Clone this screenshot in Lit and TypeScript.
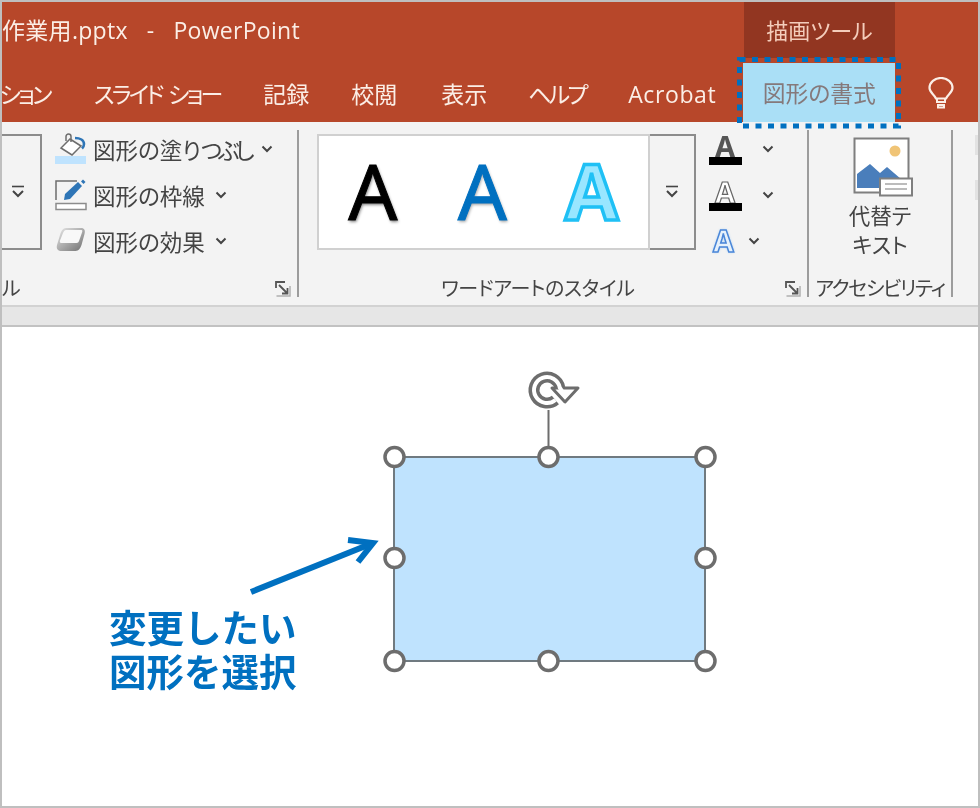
import { LitElement, html, css, svg } from "lit";
import { customElement } from "lit/decorators.js";

const chev = html`<svg class="chev" width="12" height="8" viewBox="0 0 12 8"><path d="M1.500 1.500 6 6l4.500-4.500" fill="none" stroke="#444" stroke-width="2"/></svg>`;
const more = html`<svg width="14" height="14" viewBox="0 0 14 14"><path d="M1 1.500h12" stroke="#444" stroke-width="1.600"/><path d="M2 6l5 5 5-5" fill="none" stroke="#444" stroke-width="2"/></svg>`;
const launcher = html`<svg class="launch" width="16" height="16" viewBox="0 0 16 16"><path d="M15 5V15H1.500" fill="none" stroke="#b0b0b0" stroke-width="1.500"/><path d="M1 7V1h9" fill="none" stroke="#555" stroke-width="1.800"/><path d="M4 4l8.500 8.500M7 12.500h5.500V7" fill="none" stroke="#555" stroke-width="1.800"/></svg>`;

const fillIcon = html`<svg width="32" height="32" viewBox="0 0 32 32">
  <path d="M0 23h31v8H0z" fill="#bfe3fe"/>
  <path d="M15 6 26 13 17 22 6 15z" fill="#fff" stroke="#6d6d6d" stroke-width="1.500"/>
  <path d="M11 8V3.500a2.500 2.500 0 0 1 5 0V9" fill="none" stroke="#6d6d6d" stroke-width="1.500"/>
  <path d="M20 5c5 0 9 2 9 6 0 2-1 3.500-2 4.500" fill="none" stroke="#2e75b6" stroke-width="2.600"/>
</svg>`;
const lineIcon = html`<svg width="32" height="32" viewBox="0 0 32 32">
  <path d="M1 21V2h21" fill="none" stroke="#6d6d6d" stroke-width="1.500"/>
  <path d="M1 24.500h30v6H1z" fill="#fff" stroke="#8c8c8c" stroke-width="1.500"/>
  <path d="M9 21 10 15 23 3l4 4L15 20z" fill="#2e75b6"/>
  <path d="M28 .5l2.500 2.500-2 2-2.500-2.500z" fill="#2e75b6"/>
</svg>`;
const effectIcon = html`<svg width="32" height="32" viewBox="0 0 32 32">
  <defs><linearGradient id="eg" x1="0" y1="0" x2="1" y2="1"><stop offset="0" stop-color="#e8e8e8"/><stop offset="1" stop-color="#6f6f6f"/></linearGradient></defs>
  <path d="M11 3h15c3.500 0 4.500 2.500 3.500 6l-3 11c-1 3-3 6-6 6H7c-4 0-6-2-5-6l3-10c1-4 3-7 6-7z" fill="url(#eg)"/>
  <path d="M11 5h15.500c1 0 1 1 .5 2.500L24 16c-.5 1-1 2-2.500 2H6c-1 0-1.500-1-1-2.500L8 8c.5-1.500 1.500-3 3-3z" fill="#f8f8f8"/>
</svg>`;
const bulb = html`<svg width="26" height="32" viewBox="0 0 26 32"><path d="M8 21.500C6.500 17.500 1.500 15.500 1.500 11a11.500 10 0 0 1 23 0c0 4.500-5 6.500-6.500 10.500z" fill="none" stroke="#fbeee6" stroke-width="2.200"/><path d="M9 21.500v3.500h8v-3.500M10 28h6v2.500h-6z" fill="none" stroke="#fbeee6" stroke-width="2"/></svg>`;
const pic = html`<svg class="pic" width="60" height="60" viewBox="0 0 60 60">
  <path d="M1.500 1.500h54v54h-54z" fill="#fff" stroke="#7f7f7f" stroke-width="2"/>
  <circle cx="42" cy="14" r="5.500" fill="#f0c476"/>
  <path d="M4 51V37L17 27l10 9 7-6 14 12v9z" fill="#4a7ebb"/>
  <path d="M27 41.500h32v17H27z" fill="#fff" stroke="#7f7f7f" stroke-width="2"/>
  <path d="M32 47h22M32 52h22" stroke="#a6a6a6" stroke-width="1.500"/>
</svg>`;
const handles = [
  [394.5, 130], [548.5, 130], [705.5, 130],
  [394.5, 231], [705.5, 231],
  [394.5, 334], [548.5, 334], [705.5, 334],
];

@customElement("app-root")
export class AppRoot extends LitElement {
  static styles = css`
    :host { display: block; width: 980px; height: 808px; box-sizing: border-box; border: 2px solid #bfbfbf; position: relative; overflow: hidden; background: #fff;
      font-family: "Open Sans", "Noto Sans CJK JP", sans-serif; font-feature-settings: "palt"; color: #444; filter: blur(0.35px); }
    .title { height: 56px; background: #b7472a; display: flex; color: #fbeee6; font-size: 23px; }
    .doc { padding-top: 11px; white-space: pre; flex: 1; line-height: 34px; letter-spacing: .3px; word-spacing: 3.200px; }
    .ctx { width: 151px; margin-right: 83px; background: #923621; color: #f4cdbb; text-align: center; line-height: 56px; font-size: 22px; }
    .tabs { height: 64px; background: #b7472a; display: flex; align-items: flex-start; color: #fbeee6; font-size: 23px; line-height: 72px; }
    .tab { margin-right: 42px; white-space: pre; }
    .tab.k { letter-spacing: -2.800px; margin-right: 42.500px; }
    .tab.first { margin-left: -22px; margin-right: 44px; }
    .tab.m44 { margin-right: 44px; }
    .tab.m41 { margin-right: 41px; }
    .tab.ac { letter-spacing: .6px; margin-right: 27px; }
    .tab.sel { width: 152px; height: 59px; margin: 5px 33px 0 0; background: #aadff6; color: #85797b; text-align: center; line-height: 62px; font-size: 22.800px; }
    .bulb { margin-top: 19px; line-height: 0; }
    .ribbon { height: 183px; background: #f3f3f3; display: flex; }
    .group { display: flex; flex-direction: column; border-right: 2px solid #9c9c9c; height: 167px; margin-top: 8px; box-sizing: border-box; }
    .g1 { width: 297px; }
    .g2 { width: 510px; }
    .g3 { width: 144px; }
    .body { flex: 1; display: flex; padding-top: 4px; min-height: 0; }
    .label { height: 20px; display: flex; align-items: center; font-size: 20px; color: #444; position: relative; }
    .label .launch { position: absolute; right: 6px; bottom: 0; }
    .more { width: 40px; height: 116px; box-sizing: border-box; border: 2px solid #8c8c8c; border-left: none; display: flex; align-items: center; justify-content: center; padding-right: 6px; }
    .more.m2 { width: 46px; padding: 0; }
    .list { margin-left: 13px; display: flex; flex-direction: column; margin-top: -8px; }
    .row { height: 46px; display: flex; align-items: center; font-size: 22.500px; white-space: nowrap; }
    .row svg:first-child { margin-right: 6px; }
    .row b { font-weight: 400; letter-spacing: -4px; }
    .chev { margin-left: 10px; }
    .gallery { margin-left: 18px; width: 333px; height: 116px; box-sizing: border-box; border: 2px solid #d0d0d0; background: #fff; display: flex; }
    .gallery div { width: 109.500px; text-align: center; font-family: "Noto Sans", sans-serif; font-size: 77px; line-height: 110px; }
    .gallery .a1 { margin-left: -1px; }
    .a1 { color: #000; font-weight: 400; -webkit-text-stroke: 1px #000; text-shadow: 1px 2px 3px #0007; }
    .a2 { color: #0070c0; font-weight: 400; -webkit-text-stroke: 1px #0070c0; text-shadow: 1px 2px 3px #0005; }
    .a3 { color: #99e6ff; font-weight: 700; -webkit-text-stroke: 3.500px #1fc0f5; }
    .tools { margin-left: 12px; margin-top: -8px; display: flex; flex-direction: column; }
    .tool { height: 46px; display: flex; align-items: center; }
    .tool .chev { margin-left: 20px; }
    .tool .chev.s { margin-left: 12px; }
    .letter { width: 34px; display: flex; flex-direction: column; align-items: center; font-family: "Noto Sans", sans-serif; font-weight: 700; line-height: 23px; font-size: 29px; }
    .letter i { display: block; width: 33px; height: 8px; background: #000; }
    .t1 { color: #555; }
    .t2 { color: #fff; -webkit-text-stroke: 1.200px #666; }
    .t3 { color: #e6f1fb; -webkit-text-stroke: 1.500px #4a86d8; text-shadow: 0 0 3px #8cc0f0; margin: 0 2px 0 5px; width: auto; font-size: 30px; line-height: 28px; }
    .g3 .body { flex-direction: column; align-items: center; padding-top: 7px; }
    .pic { margin-left: 5px; }
    .alt { font-size: 21.500px; line-height: 29px; text-align: center; margin-top: 4px; }
    .g3 .label { justify-content: center; letter-spacing: -1.400px; white-space: nowrap; }
    .g2 .label { padding-left: 142px; letter-spacing: -.3px; }
    .edge { flex: 1; display: flex; flex-direction: column; align-items: flex-end; gap: 25px; padding-top: 13px; }
    .edge i { width: 3px; height: 20px; background: #e2e2e2; }
    .band { height: 22px; box-sizing: border-box; background: #e6e6e6; border-top: 2px solid #d2d2d2; border-bottom: 2px solid #c2c2c2; }
    .canvas { position: relative; height: 479px; }
    .canvas svg { position: absolute; left: -2px; top: 0; }
    .note { position: absolute; left: 107px; top: 279px; font-size: 37.500px; line-height: 44px; font-weight: 700; color: #0070c0; font-feature-settings: normal; white-space: nowrap; }
    .dots { position: absolute; left: -2px; top: -2px; pointer-events: none; }
  `;

  render() {
    return html`
      <div class="title">
        <div class="doc">作業用.pptx  -  PowerPoint</div>
        <div class="ctx">描画ツール</div>
      </div>
      <div class="tabs">
        <div class="tab k first">ーション</div>
        <div class="tab k">スライド  ショー</div>
        <div class="tab">記録</div>
        <div class="tab m44">校閲</div>
        <div class="tab m41">表示</div>
        <div class="tab k">ヘルプ</div>
        <div class="tab ac">Acrobat</div>
        <div class="tab sel">図形の書式</div>
        <div class="bulb">${bulb}</div>
      </div>
      <div class="ribbon">
        <div class="group g1">
          <div class="body">
            <div class="more">${more}</div>
            <div class="list">
              <div class="row">${fillIcon}図形の塗り<b>つぶし</b>${chev}</div>
              <div class="row">${lineIcon}図形の枠線${chev}</div>
              <div class="row">${effectIcon}図形の効果${chev}</div>
            </div>
          </div>
          <div class="label">ル${launcher}</div>
        </div>
        <div class="group g2">
          <div class="body">
            <div class="gallery">
              <div class="a1">A</div><div class="a2">A</div><div class="a3">A</div>
            </div>
            <div class="more m2">${more}</div>
            <div class="tools">
              <div class="tool"><div class="letter t1">A<i></i></div>${chev}</div>
              <div class="tool"><div class="letter t2">A<i></i></div>${chev}</div>
              <div class="tool"><div class="letter t3">A</div><svg class="chev s" width="12" height="8" viewBox="0 0 12 8"><path d="M1.500 1.500 6 6l4.500-4.500" fill="none" stroke="#444" stroke-width="2"/></svg></div>
            </div>
          </div>
          <div class="label">ワードアートのスタイル${launcher}</div>
        </div>
        <div class="group g3">
          <div class="body">
            ${pic}
            <div class="alt">代替テ<br />キスト</div>
          </div>
          <div class="label">アクセシビリティ</div>
        </div>
        <div class="edge"><i></i><i></i></div>
      </div>
      <div class="band"></div>
      <div class="canvas">
        <svg width="980" height="480" viewBox="0 0 980 480">
          <path d="M548.500 83v47" stroke="#6d6d6d" stroke-width="2"/>
          <rect x="394" y="130" width="311" height="204" fill="#bfe3fe" stroke="#707a80" stroke-width="2"/>
          ${handles.map(([x, y]) => svg`<circle cx=${x} cy=${y} r="9.500" fill="#fff" stroke="#6d6d6d" stroke-width="3.500"/>`)}
          <path d="M555.400 73A13 13 0 1 1 559.800 60.700" fill="none" stroke="#6d6d6d" stroke-width="11"/>
          <path d="M552 61H578L565 75z" fill="#fff" stroke="#6d6d6d" stroke-width="3" stroke-linejoin="round"/>
          <path d="M555.400 73A13 13 0 1 1 559.800 60.700L562 64" fill="none" stroke="#fff" stroke-width="4"/>
          <path d="M251 265 373 216" stroke="#0070c0" stroke-width="6"/>
          <path d="M348 213 373 216 358 235" fill="none" stroke="#0070c0" stroke-width="6"/>
        </svg>
        <div class="note">変更したい<br />図形を選択</div>
      </div>
      <svg class="dots" width="980" height="140" viewBox="0 0 980 140">
        <rect x="739.500" y="59.500" width="159" height="66.500" fill="none" stroke="#0070c0" stroke-width="5" stroke-dasharray="6 6.500"/>
      </svg>
    `;
  }
}
